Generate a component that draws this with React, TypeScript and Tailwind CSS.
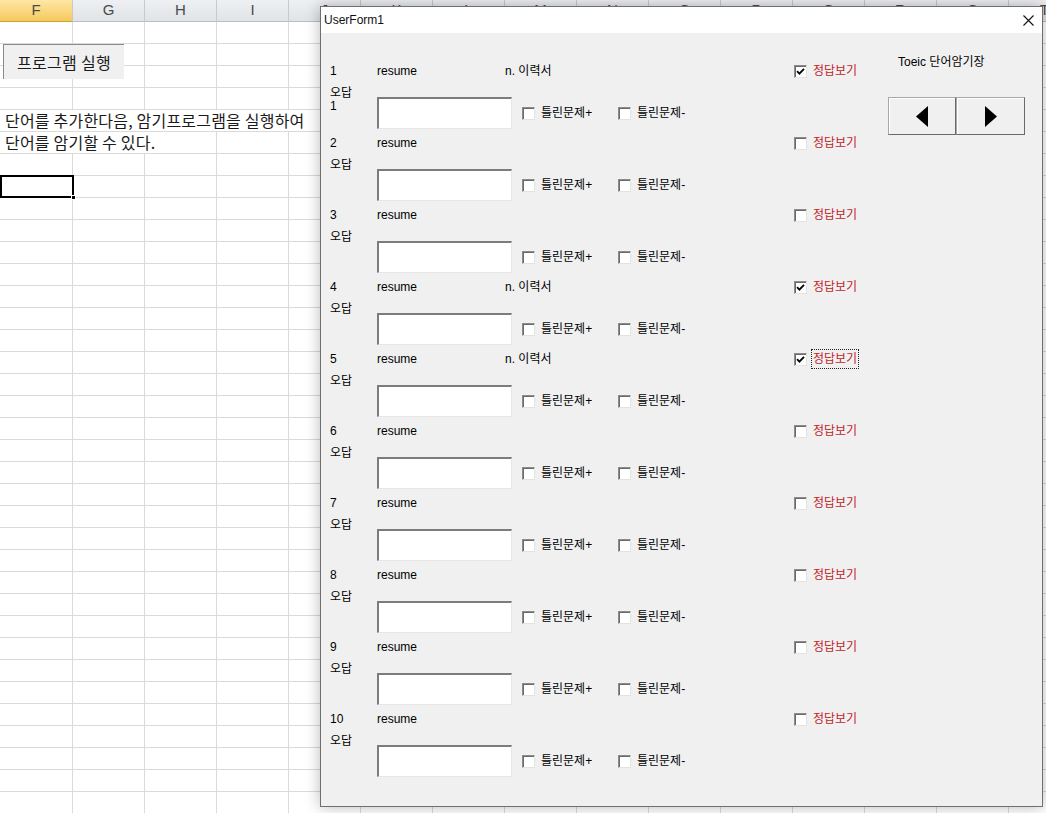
const COLS = ["F", "G", "H", "I", "J", "K", "L", "M", "N", "O", "P", "Q", "R", "S", "T"];
const ROW_COUNT = 37;

type Row = { n: number; meaning?: string; checked?: boolean; focus?: boolean; extra?: string };

const ROWS: Row[] = [
  { n: 1, meaning: "n. 이력서", checked: true, extra: "1" },
  { n: 2 },
  { n: 3 },
  { n: 4, meaning: "n. 이력서", checked: true },
  { n: 5, meaning: "n. 이력서", checked: true, focus: true },
  { n: 6 },
  { n: 7 },
  { n: 8 },
  { n: 9 },
  { n: 10 },
];

function Box({ checked }: { checked?: boolean }) {
  return (
    <span className="w-[13px] h-[13px] shrink-0 bg-white border border-[#8c8c8c] border-b-[#e3e3e3] border-r-[#e3e3e3] shadow-[inset_1px_1px_0_#6a6a6a] flex items-center justify-center">
      {checked && (
        <svg width="9" height="9" viewBox="0 0 9 9">
          <path d="M1 4.2 L3.4 6.6 L8 1.8" stroke="#000" strokeWidth="1.8" fill="none" />
        </svg>
      )}
    </span>
  );
}

function Check({ label, checked, red, focus }: { label: string; checked?: boolean; red?: boolean; focus?: boolean }) {
  return (
    <div className="flex items-center gap-[4px]">
      <Box checked={checked} />
      <span
        className={
          (red ? "text-[#c0242a] " : "text-black ") +
          (focus ? "border border-dotted border-[#222] px-[1px]" : "border border-transparent px-[1px]")
        }
      >
        {label}
      </span>
    </div>
  );
}

function Spreadsheet() {
  return (
    <div className="absolute inset-0 bg-white">
      {/* column header */}
      <div className="flex h-[22px]">
        {COLS.map((c, i) => (
          <div
            key={c}
            className={
              (i === 0 ? "w-[73px] bg-gradient-to-b from-[#fde7a3] to-[#f7c95a] border-b-[#c9a13a] " : "w-[72px] bg-gradient-to-b from-[#eef0f3] to-[#e0e3e7] border-b-[#b9bcc0] ") +
              "shrink-0 border-r border-r-[#c6c9cd] border-b flex items-center justify-center text-[15px] text-[#4a4a4a] font-['Liberation_Sans',sans-serif]"
            }
          >
            {c}
          </div>
        ))}
      </div>
      {Array.from({ length: ROW_COUNT }).map((_, r) => (
        <div key={r} className="flex h-[22px]">
          {COLS.map((c, i) => (
            <div
              key={c}
              className={(i === 0 ? "w-[73px] " : "w-[72px] ") + "shrink-0 border-r border-b border-[#dadada]"}
            />
          ))}
        </div>
      ))}

      {/* program button */}
      <div className="absolute left-[3px] top-[44px] w-[121px] h-[35px] bg-[#f0f0f0] border-l border-t border-[#8a8a8a] flex items-center pl-[13px] text-[16px] tracking-[0.3px] text-[#1a1a1a] font-['Noto_Sans_CJK_KR',sans-serif]">
        프로그램 실행
      </div>

      {/* overflowing cell text */}
      <div className="absolute left-0 top-[110px] text-[16px] tracking-[0.2px] leading-[21px] text-[#1a1a1a] font-['Noto_Sans_CJK_KR',sans-serif]">
        <div className="bg-white pl-[5px] w-[361px] h-[21px] whitespace-nowrap">단어를 추가한다음, 암기프로그램을 실행하여</div>
        <div className="bg-white pl-[5px] w-[216px] h-[21px] mt-[1px] whitespace-nowrap">단어를 암기할 수 있다.</div>
      </div>

      {/* selected cell */}
      <div className="absolute left-0 top-[175px] w-[74px] h-[23px] border-2 border-black">
        <div className="absolute right-[-4px] bottom-[-4px] w-[5px] h-[5px] bg-black border border-white" />
      </div>
    </div>
  );
}

function FormRow({ row }: { row: Row }) {
  return (
    <div className="h-[72px] flex flex-col">
      <div className="h-[22px] flex items-center">
        <span className="w-[47px] shrink-0">{row.n}</span>
        <span className="w-[128px] shrink-0">resume</span>
        <span className="w-[289px] shrink-0">{row.meaning ?? ""}</span>
        <Check label="정답보기" checked={row.checked} red focus={row.focus} />
      </div>
      <div className="flex">
        <div className="w-[47px] shrink-0 pt-[5px] leading-[13px]">
          <div>오답</div>
          {row.extra && <div>{row.extra}</div>}
        </div>
        <div className="flex items-center mt-[15px]">
          <div className="w-[135px] h-[32px] bg-white border-t-2 border-l-2 border-t-[#7c7c7c] border-l-[#7c7c7c] border-b border-r border-b-[#e6e6e6] border-r-[#e6e6e6]" />
          <div className="w-[106px] pl-[10px]">
            <Check label="틀린문제+" />
          </div>
          <Check label="틀린문제-" />
        </div>
      </div>
    </div>
  );
}

function Triangle({ dir }: { dir: "left" | "right" }) {
  return (
    <svg width="12" height="21" viewBox="0 0 12 21">
      {dir === "left" ? <polygon points="12,0 12,21 0,10.5" fill="#000" /> : <polygon points="0,0 0,21 12,10.5" fill="#000" />}
    </svg>
  );
}

function UserForm() {
  return (
    <div className="absolute left-[320px] top-[6px] w-[723px] h-[801px] bg-[#f0f0f0] border border-[#6f6f6f] shadow-[0_0_14px_rgba(0,0,0,0.28)] flex flex-col font-['Liberation_Sans','Noto_Sans_CJK_KR',sans-serif] text-[12px] text-black">
      <div className="h-[26px] bg-white flex items-center justify-between pl-[3px] pr-[8px] shrink-0">
        <span className="text-[12px] text-[#111]">UserForm1</span>
        <svg width="11" height="11" viewBox="0 0 11 11">
          <path d="M0.5 0.5 L10.5 10.5 M10.5 0.5 L0.5 10.5" stroke="#111" strokeWidth="1.1" />
        </svg>
      </div>
      <div className="flex flex-1">
        <div className="w-[567px] pt-[27px] pl-[9px]">
          {ROWS.map((r) => (
            <FormRow key={r.n} row={r} />
          ))}
        </div>
        <div className="pt-[22px]">
          <div className="pl-[10px] h-[14px] leading-[14px]">Toeic 단어암기장</div>
          <div className="flex mt-[28px]">
            <button className="w-[68px] h-[38px] bg-[#f0f0f0] border border-[#a8a8a8] border-b-[#6a6a6a] border-r-[#6a6a6a] shadow-[inset_1px_1px_0_#ffffff] flex items-center justify-center">
              <Triangle dir="left" />
            </button>
            <button className="w-[69px] h-[38px] bg-[#f0f0f0] border border-[#a8a8a8] border-b-[#6a6a6a] border-r-[#6a6a6a] shadow-[inset_1px_1px_0_#ffffff] flex items-center justify-center">
              <Triangle dir="right" />
            </button>
          </div>
        </div>
      </div>
    </div>
  );
}

export default function App() {
  return (
    <div className="relative w-[1046px] h-[813px] overflow-hidden bg-white">
      <Spreadsheet />
      <UserForm />
    </div>
  );
}
